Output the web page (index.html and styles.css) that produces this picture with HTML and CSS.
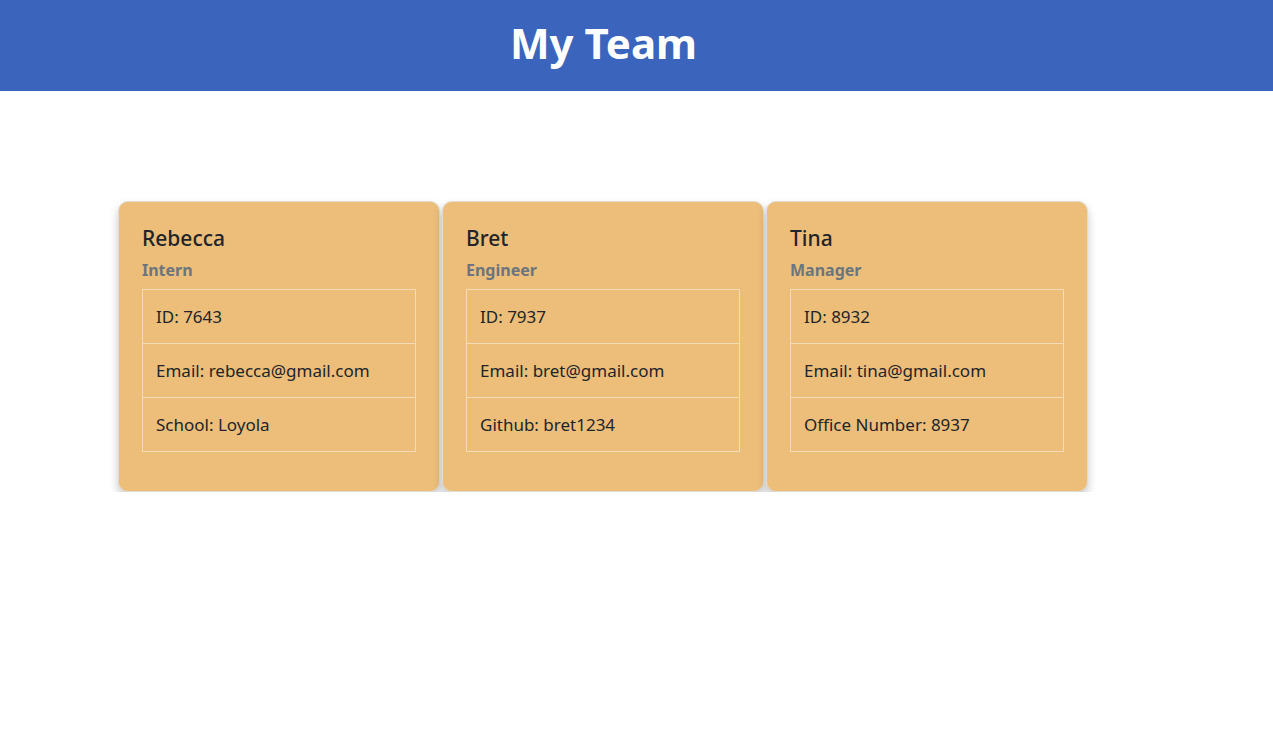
FILE: index.html
```html
<!DOCTYPE html>
<html lang="en">
<head>
<meta charset="utf-8">
<title>My Team</title>
<link rel="stylesheet" href="styles.css">
</head>
<body>
<header class="topbar">
  <h1 class="title">My Team</h1>
</header>
<main class="team">
  <div class="card">
    <h5 class="card-name">Rebecca</h5>
    <h6 class="card-role">Intern</h6>
    <ul class="info">
      <li>ID: 7643</li>
      <li>Email: rebecca@gmail.com</li>
      <li>School: Loyola</li>
    </ul>
  </div>
  <div class="card">
    <h5 class="card-name">Bret</h5>
    <h6 class="card-role">Engineer</h6>
    <ul class="info">
      <li>ID: 7937</li>
      <li>Email: bret@gmail.com</li>
      <li>Github: bret1234</li>
    </ul>
  </div>
  <div class="card">
    <h5 class="card-name">Tina</h5>
    <h6 class="card-role">Manager</h6>
    <ul class="info">
      <li>ID: 8932</li>
      <li>Email: tina@gmail.com</li>
      <li>Office Number: 8937</li>
    </ul>
  </div>
</main>
</body>
</html>
```
FILE: styles.css
```css
* { box-sizing: border-box; }
body {
  margin: 0;
  font-family: "Noto Sans", "Open Sans", sans-serif;
  color: #212529;
  background: #fff;
}
.topbar {
  height: 91px;
  background: #3b64bd;
  display: flex;
  justify-content: center;
  align-items: center;
  padding: 0 66px 6px 0;
}
.title {
  margin: 0;
  color: #fff;
  font-size: 42px;
  font-weight: 700;
  line-height: 1;
}
.team {
  display: flex;
  gap: 2px;
  padding: 110px 0 0 118px;
}
.card {
  width: 322px;
  background: #ecbe7a;
  border: 1px solid #e0dcd4;
  border-radius: 10px;
  box-shadow: 0 5px 10px rgba(0,0,0,0.22);
  padding: 24px 23px 39px;
}
.card-name {
  margin: 0 0 10px;
  font-size: 21px;
  font-weight: 500;
  line-height: 1.2;
}
.card-role {
  margin: 0 0 9px;
  font-size: 16px;
  font-weight: 700;
  color: #6c757d;
  line-height: 1.2;
}
.info {
  list-style: none;
  margin: 0;
  padding: 0;
  border: 1px solid #f3dcb6;
}
.info li {
  height: 54px;
  padding: 0 13px;
  display: flex;
  align-items: center;
  font-size: 17px;
  border-top: 1px solid #f3dcb6;
}
.info li:first-child { border-top: none; height: 53px; }
```
